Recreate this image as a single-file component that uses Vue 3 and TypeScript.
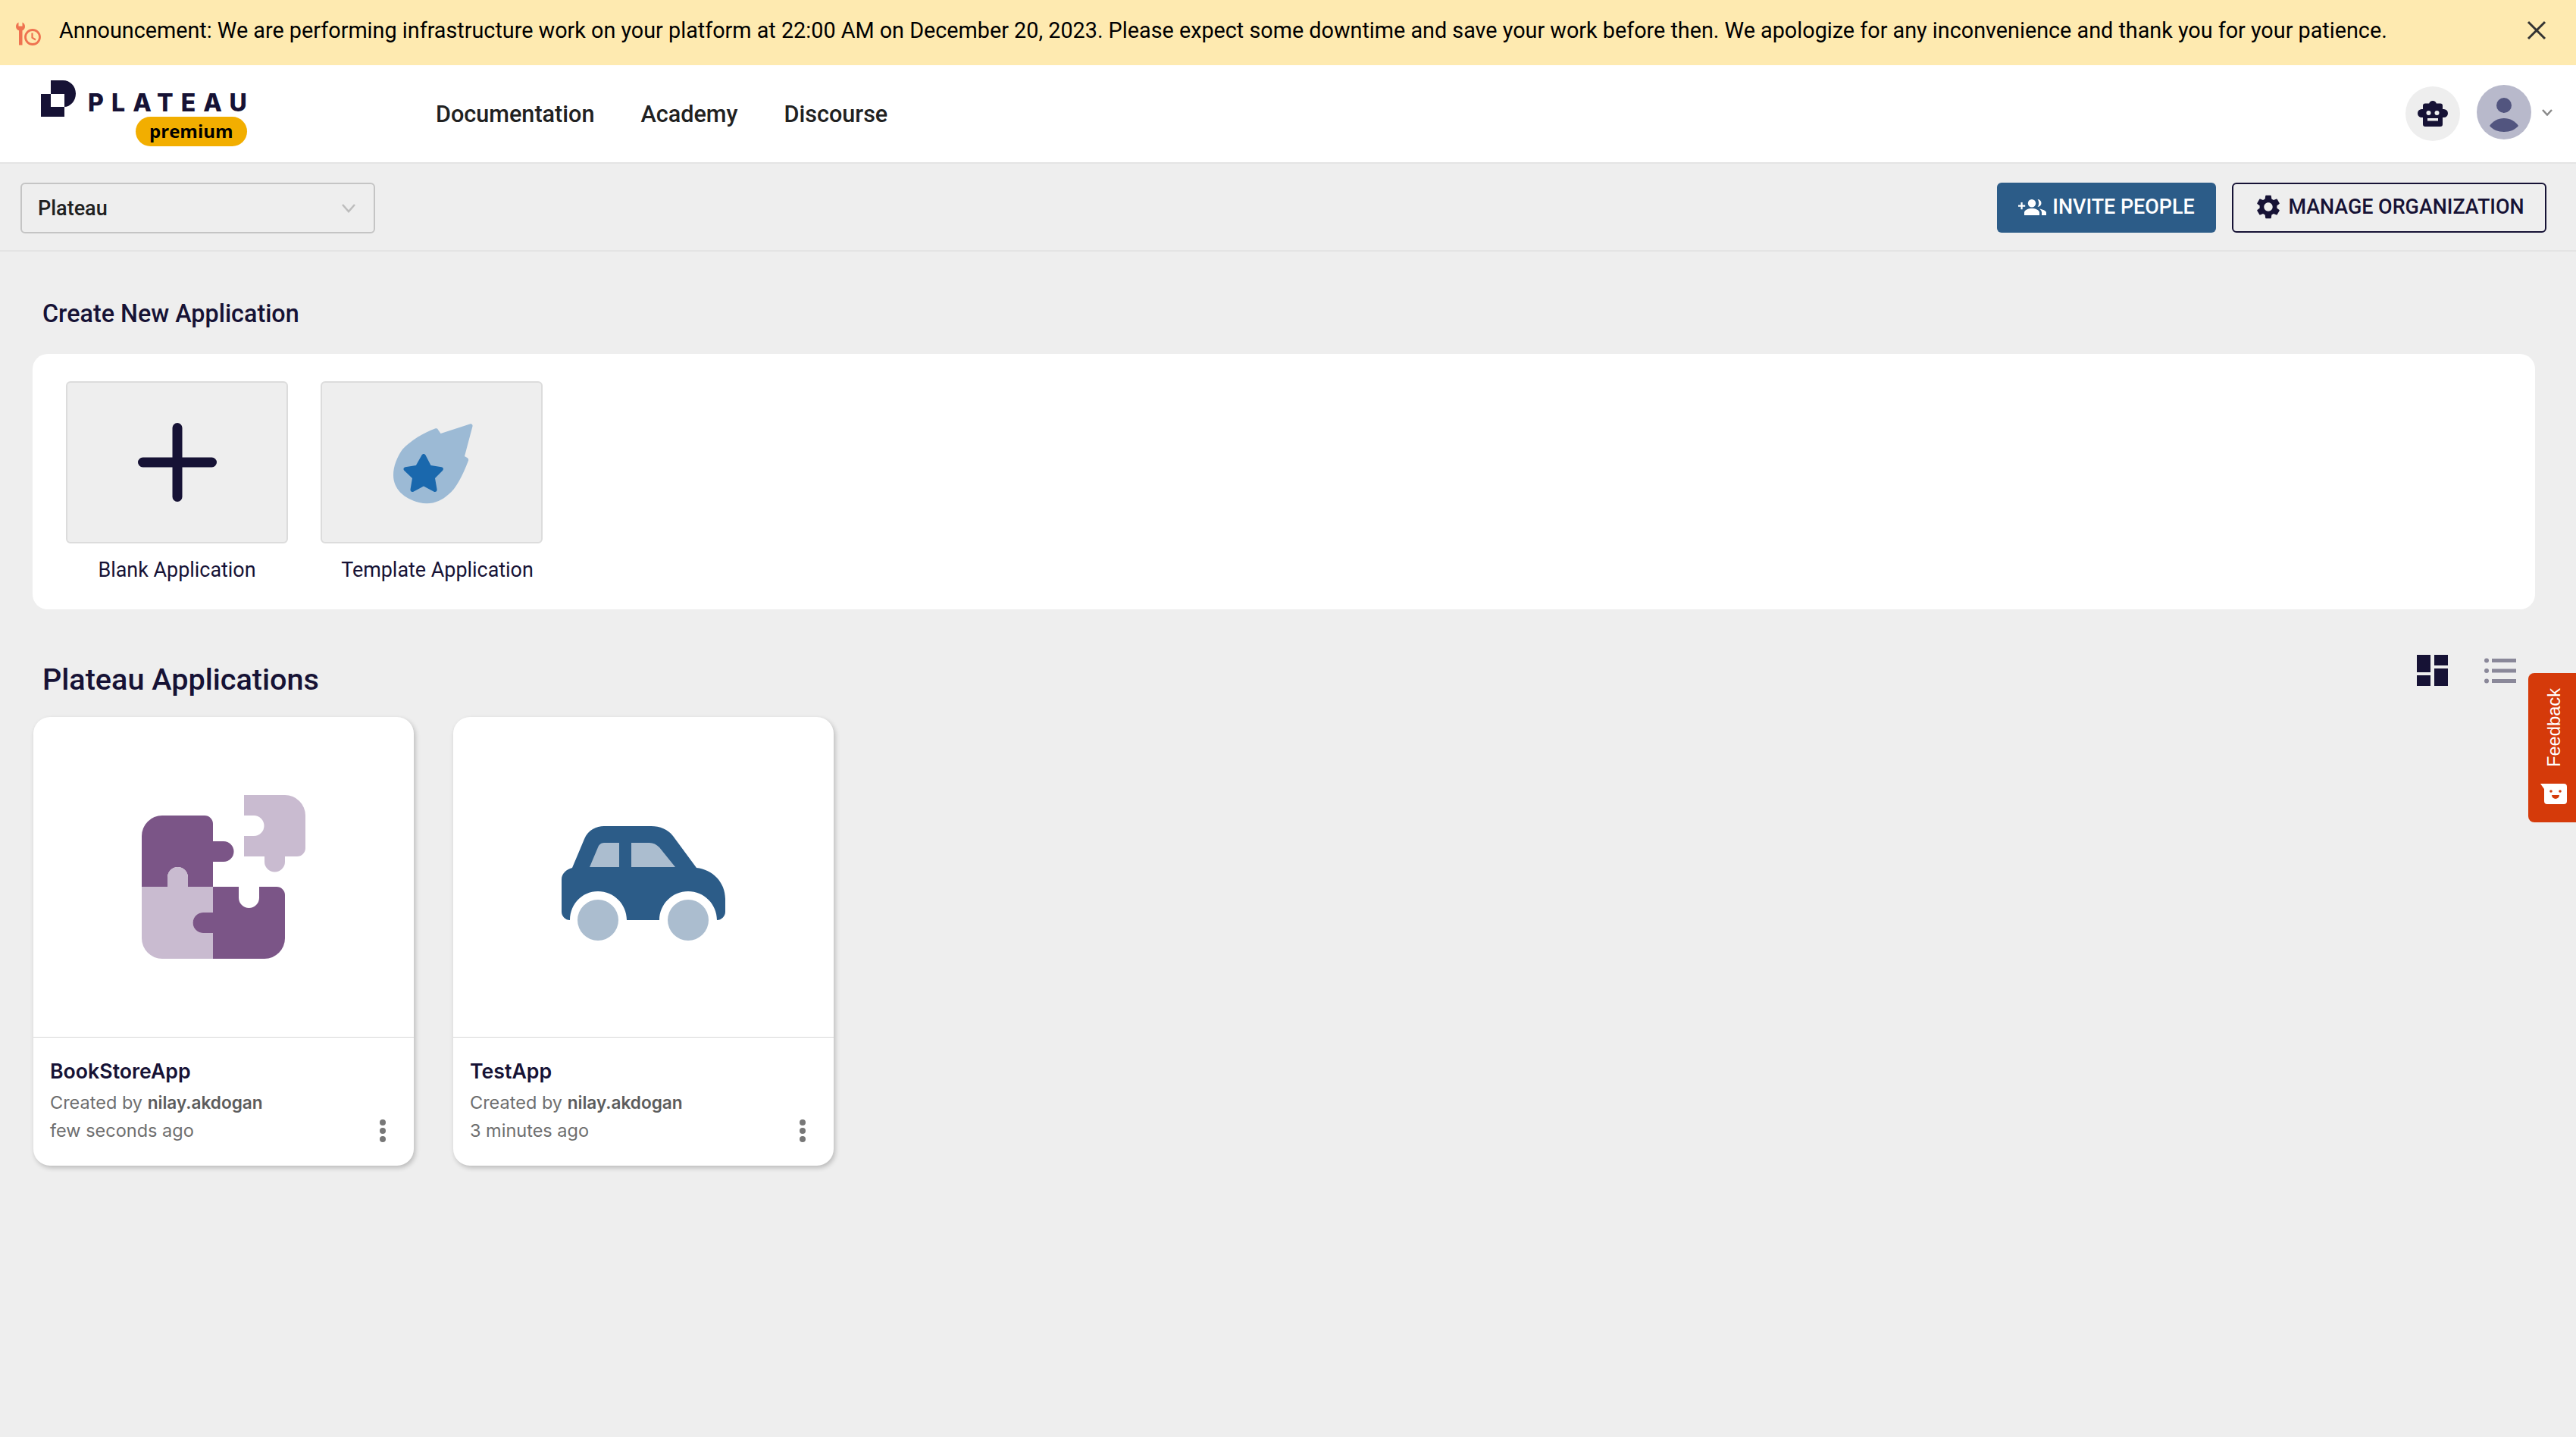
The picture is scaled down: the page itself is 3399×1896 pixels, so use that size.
<script setup lang="ts">
interface AppCard {
  name: string
  owner: string
  time: string
}
const navItems: string[] = ['Documentation', 'Academy', 'Discourse']
const apps: AppCard[] = [
  { name: 'BookStoreApp', owner: 'nilay.akdogan', time: 'few seconds ago' },
  { name: 'TestApp', owner: 'nilay.akdogan', time: '3 minutes ago' },
]
</script>

<template>
  <div class="page">
    <div class="banner">
      <svg class="banner-icon" viewBox="0 0 33 31" width="33" height="31">
        <path d="M3.500 .4V5.500H8.500V.4C10.800 1.300 12 3.600 12 6c0 2.400-1.300 4.400-3.500 5.300V30.500H4V11.300C1.500 10.400 0 8.400 0 6 0 3.500 1.300 1.300 3.500 .4z" fill="#ef7350" />
        <circle cx="22" cy="20" r="9.500" fill="none" stroke="#ef7350" stroke-width="2.800" />
        <path d="M21.500 14.500v6.200l4.500 2.800" fill="none" stroke="#ef7350" stroke-width="2.200" />
      </svg>
      <span class="banner-text">Announcement: We are performing infrastructure work on your platform at 22:00 AM on December 20, 2023. Please expect some downtime and save your work before then. We apologize for any inconvenience and thank you for your patience.</span>
      <svg class="banner-close" viewBox="0 0 26 26" width="26" height="26">
        <path d="M2 2l22 22M24 2L2 24" stroke="#333" stroke-width="3" fill="none" />
      </svg>
    </div>

    <header class="topbar">
      <div class="logo">
        <svg class="logo-mark" viewBox="0 0 46 48" width="46" height="48">
          <path fill-rule="evenodd" fill="#161235" d="M13 0h16c9.400 0 17 7.600 17 17.500S38.400 35 31 35v13H0V18h13zM13 18v17h18V18z" />
        </svg>
        <div class="logo-words">
          <span class="logo-name">PLATEAU</span>
          <span class="logo-badge">premium</span>
        </div>
      </div>
      <nav class="nav">
        <a v-for="item in navItems" :key="item" class="nav-link">{{ item }}</a>
      </nav>
      <div class="top-actions">
        <div class="robot">
          <svg viewBox="0 0 40 34" width="40" height="34">
            <path fill="#161235" d="M20 0a5 5 0 0 1 4.800 3.600H30a3 3 0 0 1 3 3V11h1.500a5.500 5.500 0 0 1 0 11H33v9a3 3 0 0 1-3 3H10a3 3 0 0 1-3-3v-9H5.500a5.500 5.500 0 0 1 0-11H7V6.600a3 3 0 0 1 3-3h5.200A5 5 0 0 1 20 0z" />
            <circle cx="14.500" cy="16" r="3" fill="#eee" />
            <circle cx="25.500" cy="16" r="3" fill="#eee" />
            <rect x="13" y="23" width="14" height="3.500" fill="#eee" />
          </svg>
        </div>
        <div class="avatar">
          <svg viewBox="0 0 72 72" width="72" height="72">
            <circle cx="36" cy="27" r="10" fill="#52557f" />
            <path fill="#52557f" d="M17 54C21 48 28 44 36 44S51 48 55 54C51 59 44 62 36 62S21 59 17 54z" />
          </svg>
        </div>
        <svg class="avatar-caret" viewBox="0 0 14 9" width="14" height="9">
          <path d="M1 1l6 6.500L13 1" fill="none" stroke="#8a8a8a" stroke-width="2.500" />
        </svg>
      </div>
    </header>

    <div class="toolbar">
      <div class="org-select">
        <span>Plateau</span>
        <svg viewBox="0 0 18 12" width="18" height="12">
          <path d="M1 1l8 9 8-9" fill="none" stroke="#bdbdbd" stroke-width="2.500" />
        </svg>
      </div>
      <div class="toolbar-actions">
        <button class="btn btn-primary" type="button">
          <svg viewBox="0 0 37 22" width="37" height="22">
            <path fill="#fff" d="M0 8.500h3.500V5h2.200v3.500h3.500v2.200H5.700v3.500H3.500v-3.500H0zM18 1a5.200 5.200 0 1 1 0 10.400A5.200 5.200 0 0 1 18 1zM25.500 1a5 5 0 0 1 0 10c1.100-1.400 1.700-3.100 1.700-5s-.6-3.600-1.700-5zM8 22v-3.500C8 15 13.500 13 18 13s10 2 10 5.500V22zM31 22v-3.500c0-2-1.200-3.700-3-5 3.800.6 9 2.300 9 5V22z" />
          </svg>
          INVITE PEOPLE
        </button>
        <button class="btn btn-outline" type="button">
          <svg viewBox="0 0 24 24" width="38" height="38">
            <path fill="#161235" d="M19.140 12.940c.04-.3.060-.61.060-.94 0-.32-.02-.64-.07-.94l2.030-1.580a.49.49 0 0 0 .12-.61l-1.920-3.320a.488.488 0 0 0-.59-.22l-2.390.96c-.5-.38-1.030-.7-1.620-.94l-.36-2.540a.484.484 0 0 0-.48-.41h-3.840c-.24 0-.43.170-.47.41l-.36 2.540c-.59.240-1.130.570-1.620.940l-2.390-.96c-.22-.08-.47 0-.59.220L2.740 8.870c-.12.210-.08.470.12.610l2.030 1.580c-.05.3-.09.630-.09.940s.02.640.07.940l-2.030 1.580a.49.49 0 0 0-.12.610l1.920 3.320c.12.220.37.290.59.220l2.390-.96c.5.380 1.030.7 1.620.94l.36 2.540c.05.240.24.410.48.410h3.840c.24 0 .44-.17.47-.41l.36-2.540c.59-.24 1.130-.56 1.620-.94l2.390.96c.22.080.47 0 .59-.22l1.920-3.320c.12-.22.070-.47-.12-.61l-2.010-1.580zM12 15.600c-1.980 0-3.600-1.620-3.600-3.600s1.620-3.600 3.600-3.600 3.600 1.620 3.600 3.600-1.620 3.600-3.600 3.600z" />
          </svg>
          MANAGE ORGANIZATION
        </button>
      </div>
    </div>

    <main class="content">
      <h2 class="create-title">Create New Application</h2>
      <section class="create-panel">
        <div class="tile-item">
          <div class="tile">
            <svg viewBox="0 0 104 104" width="104" height="104">
              <path d="M52 6.500v91M6.500 52h91" stroke="#161235" stroke-width="13" stroke-linecap="round" fill="none" />
            </svg>
          </div>
          <span class="tile-label">Blank Application</span>
        </div>
        <div class="tile-item">
          <div class="tile">
            <svg viewBox="0 0 106 106" width="106" height="106" class="meteor">
              <path fill="#9cbad5" d="M101 .6c2-.9 4 .8 3.500 2.900L94 43l3.500 2c1.500 1 2 2.500 1.400 4C92 67 83 86 72 94c-9 8-22 14-38 10C14 99 0 86 0 68c0-12 5-24 12-34C23 22 40 12 55 6.500c2-.7 3.500 0 4 1.500l3.500 5z" />
              <path fill="#1a68ad" d="M37.500 41.500c1-2 4-2 5 0l7 13.500 14 2.300c2.500.4 3.200 3 1.400 4.700L55 72l2.600 14.700c.4 2.500-2 4-4 3L40 82.500 26.500 89.700c-2 1-4.400-.5-4-3L25 72 14.500 62c-1.800-1.700-1-4.300 1.400-4.700l14-2.300z" />
            </svg>
          </div>
          <span class="tile-label tile-label-shift">Template Application</span>
        </div>
      </section>

      <div class="apps-head">
        <h2 class="apps-title">Plateau Applications</h2>
        <div class="view-toggle">
          <svg viewBox="0 0 41 41" width="41" height="41">
            <path fill="#161235" d="M0 0h18v23H0zM23 0h18v14H23zM23 18h18v23H23zM0 27h18v14H0z" />
          </svg>
          <svg viewBox="0 0 42 34" width="42" height="34">
            <g fill="#8a8899">
              <circle cx="3" cy="3.500" r="3" />
              <circle cx="3" cy="17" r="3" />
              <circle cx="3" cy="30.500" r="3" />
              <rect x="10" y="1" width="32" height="5" />
              <rect x="10" y="14.500" width="32" height="5" />
              <rect x="10" y="28" width="32" height="5" />
            </g>
          </svg>
        </div>
      </div>

      <section class="cards">
        <article v-for="(app, i) in apps" :key="app.name" class="card">
          <div class="card-art">
            <svg v-if="i === 0" viewBox="0 0 216 216" width="216" height="216">
              <path fill="#c9bbd0" d="M135 0h54a27 27 0 0 1 27 27v43a11 11 0 0 1-11 11h-16v7a13.500 13.500 0 0 1-27 0v-7h-27V54h13a13.500 13.500 0 0 0 0-27h-13z" />
              <path fill="#7b5587" d="M27 27h56a11 11 0 0 1 11 11v23h14a13.500 13.500 0 0 1 0 27H94v33H61v-12.500a13.500 13.500 0 0 0-27 0V121H0V54a27 27 0 0 1 27-27z" />
              <path fill="#c9bbd0" d="M0 121h34v-12.500a13.500 13.500 0 0 1 27 0V121h33v34H81a13.500 13.500 0 0 0 0 27h13v34H27a27 27 0 0 1-27-27z" />
              <path fill="#7b5587" d="M94 121h34v14.500a13.500 13.500 0 0 0 27 0V121h23a11 11 0 0 1 11 11v57a27 27 0 0 1-27 27H94v-34H81a13.500 13.500 0 0 1 0-27h13z" />
            </svg>
            <svg v-else class="car" viewBox="0 0 216 152" width="216" height="152">
              <path fill="#2c5c88" d="M14 55l16-38C35 5 46 0 56 0h62c12 0 22 4 29 13l31 42c21 2 38 19 38 41v17c0 6-5 11-11 11 0-21-17-38-38-38s-38 17-38 38H86c0-21-17-38-38-38s-37 17-37 38C5 124 0 119 0 113V70c0-7 6-13 14-15z" />
              <path fill="#abbdcf" d="M37 54l11-26c1-3 4-6 8-6h20v32zM92 22h24c5 0 9 2 13 6l21 26H92z" />
              <circle cx="48" cy="124" r="27" fill="#abbdcf" />
              <circle cx="167" cy="124" r="27" fill="#abbdcf" />
            </svg>
          </div>
          <div class="card-body">
            <div class="card-name">{{ app.name }}</div>
            <div class="card-meta">Created by <strong>{{ app.owner }}</strong></div>
            <div class="card-last">
              <span class="card-meta">{{ app.time }}</span>
              <svg viewBox="0 0 8 30" width="8" height="30">
                <circle cx="4" cy="4" r="4" fill="#777" />
                <circle cx="4" cy="15" r="4" fill="#777" />
                <circle cx="4" cy="26" r="4" fill="#777" />
              </svg>
            </div>
          </div>
        </article>
      </section>
    </main>

    <aside class="feedback">
      <span class="feedback-text">Feedback</span>
      <svg viewBox="0 0 36 27" width="36" height="27">
        <path fill="#fff" d="M0 0h31a4 4 0 0 1 4 4v19a4 4 0 0 1-4 4H9a4 4 0 0 1-4-4V7z" />
        <circle cx="14" cy="10" r="1.800" fill="#d53a0a" />
        <circle cx="26" cy="10" r="1.800" fill="#d53a0a" />
        <path d="M15 15h10a5 5 0 0 1-10 0z" fill="#d53a0a" />
      </svg>
    </aside>
  </div>
</template>

<style>
html,
body {
  margin: 0;
  background: #eeeeee;
}
</style>

<style scoped>
.page {
  position: relative;
  min-height: 100vh;
  overflow: hidden;
  background: #eeeeee;
  font-family: Roboto, "Liberation Sans", sans-serif;
  color: #161235;
}

.banner {
  height: 86px;
  background: #feeab0;
  display: flex;
  align-items: center;
  padding: 0 39px 6px 21px;
  box-sizing: border-box;
}
.banner-icon {
  flex: none;
  margin-top: 8px;
}
.banner-text {
  margin-left: 24px;
  font-size: 28.780px;
  color: #000;
  white-space: nowrap;
  flex: 1;
}
.banner-close {
  flex: none;
}

.topbar {
  height: 130px;
  box-sizing: border-box;
  background: #fff;
  border-bottom: 2px solid #e4e4e4;
  display: flex;
  align-items: flex-start;
  padding-left: 54px;
}
.logo {
  display: flex;
  align-items: flex-start;
  width: 521px;
  padding-top: 20px;
}
.logo-words {
  margin-left: 16px;
  display: flex;
  flex-direction: column;
  align-items: flex-end;
}
.logo-name {
  font-family: Inter, sans-serif;
  font-weight: 800;
  font-size: 32px;
  line-height: 28px;
  letter-spacing: 10.100px;
  margin-top: 16px;
  margin-right: -10px;
}
.logo-badge {
  margin-top: 4px;
  width: 147px;
  height: 39px;
  border-radius: 20px;
  background: #f2ae00;
  color: #000;
  font-family: "Open Sans", sans-serif;
  font-weight: 700;
  font-size: 24px;
  line-height: 38px;
  text-align: center;
}
.nav {
  display: flex;
  gap: 61px;
  height: 128px;
  align-items: center;
}
.nav-link {
  font-size: 30.600px;
  font-weight: 500;
  color: #212121;
}
.top-actions {
  margin-left: auto;
  height: 128px;
  display: flex;
  align-items: center;
  padding-right: 31px;
}
.robot {
  width: 72px;
  height: 72px;
  border-radius: 50%;
  background: #eeeeee;
  display: flex;
  align-items: center;
  justify-content: center;
}
.avatar {
  width: 72px;
  height: 72px;
  border-radius: 50%;
  background: #b8b9cb;
  margin-left: 22px;
  margin-top: -5px;
}
.avatar-caret {
  margin-left: 14px;
  margin-top: -4px;
}

.toolbar {
  height: 116px;
  box-sizing: border-box;
  border-bottom: 2px solid #e4e4e4;
  display: flex;
  justify-content: space-between;
  align-items: flex-start;
  padding: 25px 39px 0 27px;
}
.org-select {
  width: 468px;
  height: 67px;
  box-sizing: border-box;
  border: 2px solid #c4c4c4;
  border-radius: 6px;
  display: flex;
  align-items: center;
  justify-content: space-between;
  padding: 0 24px 0 21px;
  font-size: 27px;
  font-weight: 500;
  color: #212121;
}
.toolbar-actions {
  display: flex;
  gap: 21px;
}
.btn {
  height: 66px;
  box-sizing: border-box;
  border-radius: 6px;
  display: flex;
  align-items: center;
  justify-content: center;
  font-family: Roboto, sans-serif;
  font-weight: 500;
  font-size: 26.900px;
  padding: 0 0 2px;
}
.btn-primary {
  width: 289px;
  background: #2c5c88;
  border: none;
  color: #fff;
  gap: 8px;
}
.btn-outline {
  width: 415px;
  background: #eeeeee;
  border: 2px solid #161235;
  color: #161235;
  gap: 7px;
}

.content {
  padding: 0 54px 0 43px;
}
.create-title {
  margin: 0;
  padding: 63px 0 0 13px;
  font-size: 32.300px;
  line-height: 38px;
  font-weight: 500;
}
.create-panel {
  margin-top: 34px;
  height: 337px;
  box-sizing: border-box;
  background: #fff;
  border-radius: 20px;
  padding: 36px 44px;
  display: flex;
  gap: 43px;
}
.tile-item {
  display: flex;
  flex-direction: column;
  align-items: center;
}
.tile {
  flex: none;
  width: 293px;
  height: 214px;
  box-sizing: border-box;
  background: #eeeeee;
  border: 2px solid #dcdcdc;
  border-radius: 6px;
  display: flex;
  align-items: center;
  justify-content: center;
}
.meteor {
  margin-top: 4px;
  margin-left: 4px;
}
.tile-label {
  margin-top: 17px;
  font-size: 26.900px;
  line-height: 36px;
}
.tile-label-shift {
  margin-left: 15px;
}

.apps-head {
  display: flex;
  justify-content: space-between;
  align-items: flex-start;
  margin-top: 60px;
  height: 82px;
}
.apps-title {
  margin: 0;
  padding: 10px 0 0 13px;
  font-size: 39.600px;
  line-height: 46px;
  font-weight: 500;
}
.view-toggle {
  display: flex;
  align-items: center;
  gap: 48px;
  margin-right: 25px;
}

.cards {
  display: flex;
  gap: 52px;
  padding-left: 1px;
}
.card {
  width: 502px;
  height: 592px;
  background: #fff;
  border-radius: 22px;
  box-shadow: 2px 3px 6px rgba(0, 0, 0, 0.22);
  overflow: hidden;
}
.card-art {
  height: 423px;
  box-sizing: border-box;
  border-bottom: 1px solid #d8d8d8;
  display: flex;
  align-items: center;
  justify-content: center;
}
.car {
  margin-top: 18px;
}
.card-body {
  padding: 24px 37px 0 22px;
  font-family: Inter, sans-serif;
}
.card-name {
  font-size: 26.700px;
  font-weight: 600;
  line-height: 40px;
  margin-bottom: 4px;
  color: #161235;
}
.card-meta {
  font-size: 23.500px;
  line-height: 36px;
  color: #6e6e6e;
}
.card-meta strong {
  font-size: 22.600px;
  font-weight: 600;
  color: #5c5c5c;
}
.card-last {
  display: flex;
  justify-content: space-between;
  align-items: center;
  margin-top: 1px;
}

.feedback {
  position: absolute;
  right: 0;
  top: 888px;
  width: 63px;
  height: 197px;
  box-sizing: border-box;
  background: #d53a0a;
  border-radius: 8px 0 0 8px;
  display: flex;
  flex-direction: column;
  align-items: center;
  padding: 20px 0 0 5px;
  gap: 22px;
}
.feedback-text {
  writing-mode: vertical-rl;
  transform: rotate(180deg);
  font-family: "Liberation Sans", Arial, sans-serif;
  font-size: 23.700px;
  line-height: 30px;
  color: #fff;
}
</style>
